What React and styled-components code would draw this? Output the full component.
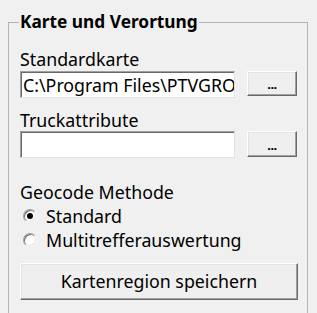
import React from 'react';
import styled, { createGlobalStyle } from 'styled-components';

const GlobalStyle = createGlobalStyle`
	html, body {
		margin: 0;
		padding: 0;
		background: #f0f0f0;
	}
	body {
		width: 317px;
		height: 313px;
		overflow: hidden;
		font-family: 'Noto Sans', 'Open Sans', sans-serif;
		font-size: 17.8px;
		color: #000;
	}
`;

const Page = styled.div`
	padding: 12px 0 0 8px;
	width: 317px;
	height: 313px;
	box-sizing: border-box;
	overflow: hidden;
`;

const GroupBox = styled.fieldset`
	margin: 0;
	width: 300px;
	height: 320px;
	box-sizing: border-box;
	border: 1px solid #b4b4b4;
	border-bottom: none;
	padding: 0 0 0 11px;

	legend {
		font-weight: bold;
		font-size: 17.3px;
		line-height: 20px;
		padding: 0 1px;
		margin-left: -1px;
	}
`;

const Label = styled.div`
	line-height: 20px;
	margin-top: ${(props) => props.top || 0}px;
`;

const Row = styled.div`
	display: flex;
	align-items: flex-start;
	margin-top: ${(props) => props.top || 0}px;
`;

const TextBox = styled.div`
	width: 215px;
	height: 27px;
	box-sizing: border-box;
	background: #fff;
	border-top: 1px solid #a0a0a0;
	border-left: 1px solid #a0a0a0;
	border-right: 1px solid #e3e3e3;
	border-bottom: 1px solid #e3e3e3;
	box-shadow: inset 1px 1px 0 #696969;
	padding: 2px 0 0 2px;
	white-space: nowrap;
	overflow: hidden;
	line-height: 22px;
`;

const Button = styled.button`
	font-family: inherit;
	font-size: ${(props) => (props.small ? '13px' : '17.8px')};
	font-weight: ${(props) => (props.small ? 'bold' : 'normal')};
	color: #000;
	width: ${(props) => props.width}px;
	height: ${(props) => props.height}px;
	margin-left: ${(props) => props.left || 0}px;
	box-sizing: border-box;
	background: #efefef;
	border-top: 1px solid #fff;
	border-left: 1px solid #fff;
	border-right: 1px solid #696969;
	border-bottom: 1px solid #696969;
	box-shadow: inset -1px -1px 0 #a0a0a0, inset 1px 1px 0 #e3e3e3;
	padding: 0;
	line-height: 1;
	display: flex;
	align-items: center;
	justify-content: center;
`;

const Dots = styled.span`
	position: relative;
	top: 1px;
	letter-spacing: -0.5px;
`;

const RadioRow = styled.label`
	display: flex;
	align-items: center;
	height: 24px;
	line-height: 24px;
	gap: 9px;
	margin-top: ${(props) => props.top || 0}px;
`;

const RadioDot = styled.span`
	width: 14px;
	height: 14px;
	border-radius: 50%;
	box-sizing: border-box;
	background: #fff;
	border: 1px solid;
	border-color: #a0a0a0 #f6f6f6 #f6f6f6 #a0a0a0;
	box-shadow: inset 1px 1px 0 #696969, inset -1px -1px 0 #e3e3e3;
	display: flex;
	align-items: center;
	justify-content: center;
	margin-left: 3px;
	flex-shrink: 0;

	&::after {
		content: '';
		width: 6px;
		height: 6px;
		border-radius: 50%;
		background: #000;
		display: ${(props) => (props.checked ? 'block' : 'none')};
	}
`;

const App = () => {
	return (
		<Page>
			<GlobalStyle />
			<GroupBox>
				<legend>Karte und Verortung</legend>
				<Label top={17}>Standardkarte</Label>
				<Row top={2}>
					<TextBox>C:\Program Files\PTVGROUP\xServer</TextBox>
					<Button small width={50} height={25} left={12}>
						<Dots>...</Dots>
					</Button>
				</Row>
				<Label top={12}>Truckattribute</Label>
				<Row top={1}>
					<TextBox />
					<Button small width={50} height={26} left={12}>
						<Dots>...</Dots>
					</Button>
				</Row>
				<Label top={24}>Geocode Methode</Label>
				<RadioRow top={2}>
					<RadioDot checked />
					Standard
				</RadioRow>
				<RadioRow>
					<RadioDot />
					Multitrefferauswertung
				</RadioRow>
				<Row top={11}>
					<Button width={278} height={37}>
						Kartenregion speichern
					</Button>
				</Row>
			</GroupBox>
		</Page>
	);
};

export default App;
